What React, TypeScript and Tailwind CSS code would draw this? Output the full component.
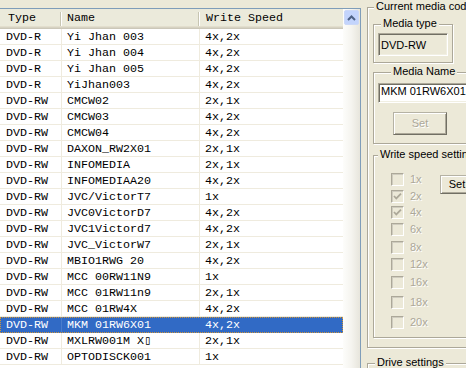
import React from "react";

type Row = [string, string, string];

const rows: Row[] = [
  ["DVD-R", "Yi Jhan 003", "4x,2x"],
  ["DVD-R", "Yi Jhan 004", "4x,2x"],
  ["DVD-R", "Yi Jhan 005", "4x,2x"],
  ["DVD-R", "YiJhan003", "4x,2x"],
  ["DVD-RW", "CMCW02", "2x,1x"],
  ["DVD-RW", "CMCW03", "4x,2x"],
  ["DVD-RW", "CMCW04", "4x,2x"],
  ["DVD-RW", "DAXON_RW2X01", "2x,1x"],
  ["DVD-RW", "INFOMEDIA", "2x,1x"],
  ["DVD-RW", "INFOMEDIAA20", "4x,2x"],
  ["DVD-RW", "JVC/VictorT7", "1x"],
  ["DVD-RW", "JVC0VictorD7", "4x,2x"],
  ["DVD-RW", "JVC1Victord7", "4x,2x"],
  ["DVD-RW", "JVC_VictorW7", "2x,1x"],
  ["DVD-RW", "MBIO1RWG 20", "4x,2x"],
  ["DVD-RW", "MCC 00RW11N9", "1x"],
  ["DVD-RW", "MCC 01RW11n9", "2x,1x"],
  ["DVD-RW", "MCC 01RW4X", "4x,2x"],
  ["DVD-RW", "MKM 01RW6X01", "4x,2x"],
  ["DVD-RW", "MXLRW001M X\u25AF", "2x,1x"],
  ["DVD-RW", "OPTODISCK001", "1x"],
];

const SELECTED = 18;

const speeds: { label: string; checked: boolean; h: string }[] = [
  { label: "1x", checked: false, h: "h-[17px]" },
  { label: "2x", checked: true, h: "h-[16px]" },
  { label: "4x", checked: true, h: "h-[17px]" },
  { label: "6x", checked: false, h: "h-[17px]" },
  { label: "8x", checked: false, h: "h-[18px]" },
  { label: "12x", checked: false, h: "h-[17px]" },
  { label: "16x", checked: false, h: "h-[19px]" },
  { label: "18x", checked: false, h: "h-[20px]" },
  { label: "20x", checked: false, h: "h-[20px]" },
];

function Group({
  title,
  titleLeft,
  className,
  children,
}: {
  title: string;
  titleLeft: string;
  className: string;
  children?: React.ReactNode;
}) {
  return (
    <div
      className={`relative shrink-0 border border-[#aca899] shadow-[inset_1px_1px_0_#fff,1px_1px_0_#fff] ${className}`}
    >
      <span
        className={`absolute -top-[8px] ${titleLeft} bg-[#ece9d8] px-[2px] leading-[13px] whitespace-nowrap`}
      >
        {title}
      </span>
      {children}
    </div>
  );
}

const btn =
  "flex items-center justify-center shrink-0 bg-[#ece9d8] border border-t-[#b5b2a4] border-l-[#b5b2a4] border-b-[#716f64] border-r-[#716f64] shadow-[inset_1px_1px_0_#fff,inset_-1px_-1px_0_#aca899]";

export default function App() {
  return (
    <div className="w-[466px] h-[368px] overflow-hidden bg-[#ece9d8] flex items-start">
      {/* List view */}
      <div className="mt-[8px] w-[361px] h-[360px] shrink-0 border-t border-r border-[#7f9db9] flex font-['Liberation_Mono',monospace] text-[11.67px] text-black">
        <div className="w-[343px] h-full bg-white flex flex-col">
          <div className="h-[20px] shrink-0 flex bg-[#ebeadb] shadow-[inset_0_-1px_0_#cbc7b8,inset_0_-2px_0_#d6d2c2,inset_0_-3px_0_#e2decd] leading-[14px]">
            <div className="w-[60px] flex items-center pl-[8px] pb-[2px]">Type</div>
            <div className="w-[2px] my-[3px] border-l border-[#c7c5b2] border-r border-r-white" />
            <div className="w-[136px] flex items-center pl-[5px] pb-[2px]">Name</div>
            <div className="w-[2px] my-[3px] border-l border-[#c7c5b2] border-r border-r-white" />
            <div className="flex-1 flex items-center pl-[6px] pb-[2px] whitespace-nowrap">Write Speed</div>
          </div>
          {rows.map((r, i) => {
            const sel = i === SELECTED;
            return (
              <div
                key={i}
                className={
                  sel
                    ? "h-[16px] shrink-0 flex bg-[#316ac5] text-white border-b border-[#316ac5] outline-1 outline-dotted outline-[#ce953a] -outline-offset-1 leading-[17px]"
                    : "h-[16px] shrink-0 flex border-b border-[#efebde] leading-[17px]"
                }
              >
                <div
                  className={`w-[62px] pl-[6px] whitespace-nowrap border-r ${sel ? "border-[#4a7dcc]" : "border-[#efebde]"}`}
                >
                  {r[0]}
                </div>
                <div
                  className={`w-[138px] pl-[5px] whitespace-nowrap border-r ${sel ? "border-[#316ac5]" : "border-[#efebde]"}`}
                >
                  {r[1]}
                </div>
                <div className="flex-1 pl-[5px] whitespace-nowrap">{r[2]}</div>
              </div>
            );
          })}
        </div>
        {/* Scrollbar */}
        <div className="w-[17px] h-full bg-linear-to-r from-[#fdfdfb] via-[#f5f4ef] to-[#e7e5dc] pt-[1px] pl-[1px]">
          <div className="w-[15px] h-[15px] rounded-[2px] border border-[#cbd8f7] bg-[#c3d4fc] flex items-center justify-center">
            <svg width="9" height="6" viewBox="0 0 9 6">
              <path d="M1 5 L4.5 1.5 L8 5" stroke="#4d6185" strokeWidth="2" fill="none" />
            </svg>
          </div>
        </div>
      </div>

      {/* Right panel */}
      <div className="pl-[6px] flex flex-col shrink-0 font-['Liberation_Sans',Arial,sans-serif] text-[11px] text-black">
        <Group
          title="Current media code"
          titleLeft="left-[6px]"
          className="mt-[7px] w-[110px] h-[341px] pt-[16px] pl-[5px] flex flex-col"
        >
          <Group title="Media type" titleLeft="left-[7px]" className="w-[80px] h-[39px] pl-[4px] pt-[8px]">
            <div className="w-[70px] h-[23px] bg-[#ece9d8] border border-t-[#aca899] border-l-[#aca899] border-b-white border-r-white shadow-[inset_1px_1px_0_#716f64,inset_-1px_-1px_0_#f1efe2] flex items-center pl-[2px] pt-[2px] whitespace-nowrap">
              DVD-RW
            </div>
          </Group>

          <Group
            title="Media Name"
            titleLeft="left-[17px]"
            className="mt-[9px] w-[110px] h-[72px] pl-[4px] pt-[10px] flex flex-col"
          >
            <div className="w-[100px] h-[20px] shrink-0 bg-white border border-t-[#aca899] border-l-[#aca899] border-b-white border-r-white shadow-[inset_1px_1px_0_#716f64,inset_-1px_-1px_0_#f1efe2] flex items-center pl-[2px] pb-[3px] whitespace-nowrap">
              MKM 01RW6X01
            </div>
            <div className={`${btn} ml-[15px] mt-[9px] w-[54px] h-[23px] text-[#aca899] [text-shadow:1px_1px_0_#fff]`}>
              Set
            </div>
          </Group>

          <Group
            title="Write speed settings"
            titleLeft="left-[4px]"
            className="mt-[11px] w-[110px] h-[183px] flex"
          >
            <div className="w-[66px] pl-[17px] pt-[15px] flex flex-col shrink-0">
              {speeds.map((s) => (
                <div key={s.label} className={`${s.h} flex items-center gap-[6px] shrink-0`}>
                  <div className="w-[13px] h-[13px] shrink-0 bg-[#ece9d8] border border-t-[#aca899] border-l-[#aca899] border-b-white border-r-white shadow-[inset_1px_1px_0_#cfccbf] flex items-center justify-center">
                    {s.checked && (
                      <svg width="11" height="11" viewBox="0 0 11 11">
                        <path d="M2 5 L4.3 7.5 L9 2.7" stroke="#aca899" strokeWidth="1.8" fill="none" />
                      </svg>
                    )}
                  </div>
                  <span className="text-[#aca899] leading-[13px] [text-shadow:1px_1px_0_#fff]">{s.label}</span>
                </div>
              ))}
            </div>
            <div className={`${btn} mt-[19px] w-[34px] h-[19px]`}>Set</div>
          </Group>
        </Group>

        <Group title="Drive settings" titleLeft="left-[7px]" className="mt-[15px] w-[110px] h-[40px]" />
      </div>
    </div>
  );
}
